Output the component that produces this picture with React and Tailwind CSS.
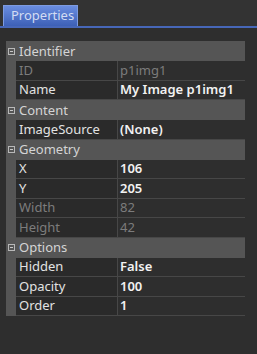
import React from "react";

const groups = [
  {
    name: "Identifier",
    rows: [
      { k: "ID", v: "p1img1", dis: true },
      { k: "Name", v: "My Image p1img1" },
    ],
  },
  { name: "Content", rows: [{ k: "ImageSource", v: "(None)" }] },
  {
    name: "Geometry",
    rows: [
      { k: "X", v: "106" },
      { k: "Y", v: "205" },
      { k: "Width", v: "82", dis: true },
      { k: "Height", v: "42", dis: true },
    ],
  },
  {
    name: "Options",
    rows: [
      { k: "Hidden", v: "False" },
      { k: "Opacity", v: "100" },
      { k: "Order", v: "1" },
    ],
  },
];

function Minus() {
  return (
    <div className="w-[7px] h-[7px] border border-[#b8b8b8] flex items-center justify-center">
      <div className="w-[3px] h-[1px] bg-[#c8c8c8]"></div>
    </div>
  );
}

export default function App() {
  return (
    <div className="w-[257px] h-[354px] bg-[#2e2e2e] font-['Noto_Sans',sans-serif] overflow-hidden">
      <div className="h-[26px] pt-[5px] pl-[3px] flex bg-[#333333]">
        <div className="w-[75px] h-[21px] bg-gradient-to-b from-[#6a8de0] to-[#3d60b6] border-t border-l border-r border-[#7d9be0] text-[#d3dcf3] text-[13px] leading-[19px] pl-[7px]">
          Properties
        </div>
      </div>
      <div className="h-[2px] bg-[#4767b8]"></div>
      <div className="pt-[13px] pl-[6px] w-[245px]">
        {groups.map((g) => (
          <div key={g.name}>
            <div className="flex items-center h-[20px] bg-[#555555]">
              <div className="w-[13px] pl-[2px] flex items-center">
                <Minus />
              </div>
              <span className="text-[13px] text-[#d4d4d4] leading-none">{g.name}</span>
            </div>
            {g.rows.map((r) => (
              <div key={r.k} className="flex h-[19.5px]">
                <div className="w-[10px] bg-[#555555]"></div>
                <div
                  className={`w-[102px] bg-[#2a2a2a] border-b border-r border-[#474747] pl-[3px] flex items-center text-[13px] leading-none ${
                    r.dis ? "text-[#7c7c7c]" : "text-[#e2e2e2]"
                  }`}
                >
                  {r.k}
                </div>
                <div
                  className={`flex-1 border-b border-[#474747] pl-[2px] flex items-center text-[13px] leading-none ${
                    r.dis ? "text-[#7c7c7c]" : "text-[#f2f2f2] font-semibold"
                  }`}
                >
                  {r.v}
                </div>
              </div>
            ))}
          </div>
        ))}
      </div>
    </div>
  );
}
